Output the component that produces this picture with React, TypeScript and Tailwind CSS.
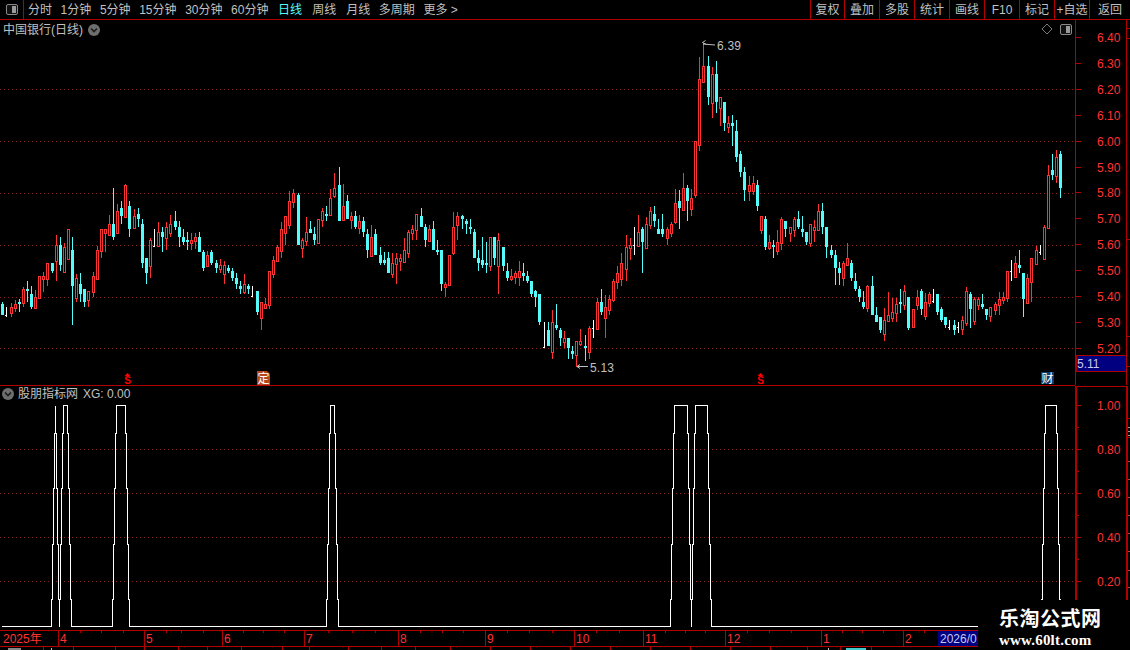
const AXIS = '#b00000';
const RED = '#ff3232';
const CYAN = '#54fcfc';
const GRID = '#8a1f1f';

// candles as type+high,top,bottom,low read off the chart, y = origin + v / 3
const SEG_A = `c427,432,465,466 w440,466,470,470 r430,442,458,470 r420,432,443,455 c418,425,431,455 r382,388,428,440 c363,387,393,425 c378,402,442,447 r390,412,443,443 r349,349,414,416
r337,349,356,395 r310,310,356,378 c309,309,333,340 r225,256,303,362 c232,255,315,333 r250,262,335,335 r208,208,296,296 c232,270,378,495 r342,355,413,425 c340,372,402,425
c388,388,427,440 r393,393,420,440 r337,348,396,410 r258,270,356,356 r208,208,272,293 r208,208,218,275 r165,193,225,225 c84,192,232,240 r132,153,219,221 c123,144,168,192
r72,75,170,172 c123,138,207,230 r148,168,204,207 c144,162,177,200 c178,192,309,325 c294,294,339,372 r234,240,318,353 w208,258,258,260 r186,217,259,262 c200,216,232,276
r186,202,234,270 r165,192,219,232 c153,183,202,210 c183,201,232,261 c207,231,246,255 c216,240,246,270 r220,240,248,270 r220,232,243,268 c216,231,276,276 c270,276,325,333
r273,285,318,318 c270,276,310,316 c300,309,324,339 r297,316,327,340 r304,316,342,372 c316,324,333,340 c324,333,354,364 c340,354,372,388 c364,378,387,402 r342,372,396,402
c372,378,387,402 w378,408,408,410 c393,393,456,464 r427,427,473,510 r414,432,443,443 r334,334,435,447 r289,301,342,354 r255,261,303,303 r186,208,272,294 r169,169,218,255
r94,124,195,207 r88,99,126,144 c99,105,255,255 r234,240,264,294 r171,217,243,258 c183,207,219,220 c201,222,240,255 r178,178,249,249 r145,154,180,200 c138,162,168,183
r87,114,164,165 r39,84,108,114 c22,75,183,183 r72,138,180,180 c105,123,177,177 r155,168,180,207 c153,168,202,207 r165,183,204,222 c171,183,216,231 c207,222,270,294
r195,231,288,288 c207,222,285,285 c261,285,309,315 c276,300,309,315 c276,294,339,339 r279,309,342,354 r279,294,312,372 r282,294,303,333 r234,270,306,309 r210,216,279,294
r195,207,219,240 r162,162,210,240 c144,168,201,201 c192,201,240,261 r195,207,243,246 c183,207,270,270 c240,270,276,285 c270,270,372,393 r366,372,381,411 r285,285,375,378
r156,201,279,285 r156,168,195,240 c165,168,177,207 c177,183,192,222 c177,201,207,222 c207,216,294,294 c270,294,309,333 c231,300,315,324 c246,309,315,339 r231,231,318,333
c231,231,294,315 r219,240,318,402 c261,261,318,333 c309,333,354,363 r327,348,357,363 r333,339,351,372 r303,333,351,378 c309,339,348,363 c333,348,363,370 c363,363,402,411
c390,393,411,441 c402,402,486,495 w486,562,562,564 c486,510,558,558 r450,486,576,597 c432,495,504,510 c504,510,534,558 r513,534,546,564 c534,534,564,597 c558,573,582,597
r543,543,585,620 r507,543,552,558 c525,558,564,603 r498,504,576,597 w480,504,504,534 r414,426,507,510 c387,426,456,465 r405,441,474,534 r405,417,450,465 r357,363,420,426
r318,339,366,387 r279,309,357,378 r225,261,327,363 r234,255,264,300 w201,255,255,285 r165,216,258,261 c201,207,246,339 r171,192,264,264 r141,153,195,207 c138,162,183,201
c177,207,222,222 c162,207,222,231 r201,207,234,255 r186,192,219,231 r87,129,186,192 c90,123,144,207 r39,84,150,153 c75,84,123,183 r87,114,147,168`;

const SEG_B = `r333,333,495,503 r82,148,345,363 r40,108,156,156 c78,108,201,225 r111,132,219,264 c93,132,216,249 r201,201,234,288 c216,216,279,303 r258,279,291,309 c255,279,288,348
c270,303,381,396 c363,372,426,441 c411,426,480,513 r438,465,483,513 r438,459,483,495 c450,465,528,543 r558,558,600,612 c558,567,651,660 r615,636,654,660 c630,645,651,684
r600,636,663,675 r561,567,639,660 c573,573,597,621 r591,591,609,636 r561,567,600,621 c543,567,591,597 c558,597,606,621 c606,606,636,645 r582,582,639,651 r570,591,600,636
r522,543,600,600 c519,543,591,612 c591,591,651,684 c645,660,675,684 c660,675,714,765`;

const SEG_C = `c396,414,428,465 r392,400,445,468 r340,385,405,405 c390,399,444,453 c429,453,477,483 c468,477,501,516 c483,516,531,537 r465,468,534,546 c438,468,555,555 c531,555,576,576
c561,561,600,609 r534,570,612,633 r486,555,573,576 r504,546,564,576 r504,522,549,576 c477,516,522,549 r465,483,525,540 c501,501,594,600 r537,537,591,594 r480,501,525,540
c477,483,537,555 r489,516,558,570 r486,492,519,531 w477,512,512,520 c492,492,546,555 c531,537,570,576 c561,561,585,594 w570,590,590,600 c570,585,600,615 w575,590,590,608
r558,570,597,615 r471,483,579,588 c486,492,537,594 r501,507,573,585 r501,507,525,540 c492,522,531,537 c537,537,555,570 r531,531,558,576 r516,522,540,555 r486,507,525,555
r486,501,510,522 r423,423,504,516 w390,423,423,453 r378,399,441,441 c360,405,414,429 c429,429,507,561 r432,444,520,522 r384,384,456,516 r348,360,402,405 w345,367,367,375
r285,291,387,387 r105,135,294,294 c72,120,135,150 r60,81,138,159 c63,72,174,204`;

type Candle = { kind: string; high: number; top: number; bottom: number; low: number };

const parseSeg = (seg: string, origin: number): Candle[] =>
  seg.trim().split(/\s+/).map((tok) => {
    const [high, top, bottom, low] = tok.slice(1).split(',').map((v) => Math.round(origin + Number(v) / 3));
    return { kind: tok[0], high, top, bottom, low };
  });

const CANDLES = [...parseSeg(SEG_A, 160), ...parseSeg(SEG_B, 30), ...parseSeg(SEG_C, 130)];

const LEFT_TABS = [
  { label: '分时', cls: '' },
  { label: '1分钟', cls: '' },
  { label: '5分钟', cls: '' },
  { label: '15分钟', cls: '' },
  { label: '30分钟', cls: '' },
  { label: '60分钟', cls: '' },
  { label: '日线', cls: 'ml-px text-[#54fcfc]' },
  { label: '周线', cls: 'ml-[1.5px]' },
  { label: '月线', cls: 'ml-[1.5px]' },
  { label: '多周期', cls: '' },
  { label: '更多 >', cls: '' },
];
const RIGHT_TABS = [
  { label: '复权', w: 'w-[34px]' },
  { label: '叠加', w: 'w-[35px]' },
  { label: '多股', w: 'w-[35px]' },
  { label: '统计', w: 'w-[35px]' },
  { label: '画线', w: 'w-[35px]' },
  { label: 'F10', w: 'w-[35px]' },
  { label: '标记', w: 'w-[35px]' },
  { label: '+自选', w: 'w-[35px]' },
  { label: '返回', w: 'w-[41px]' },
];

const MAIN_GRID = [89, 141, 193, 245, 297, 348];
const PRICE_LABELS = ['6.40', '6.30', '6.20', '6.10', '6.00', '5.90', '5.80', '5.70', '5.60', '5.50', '5.40', '5.30', '5.20'];
const SUB_LABELS = [
  { y: 405, t: '1.00' },
  { y: 449, t: '0.80' },
  { y: 493, t: '0.60' },
  { y: 537, t: '0.40' },
  { y: 581, t: '0.20' },
];
const MONTHS = [
  { x: 58, t: '4' },
  { x: 144, t: '5' },
  { x: 222, t: '6' },
  { x: 304, t: '7' },
  { x: 398, t: '8' },
  { x: 485, t: '9' },
  { x: 574, t: '10' },
  { x: 643, t: '11' },
  { x: 725, t: '12' },
  { x: 821, t: '1' },
  { x: 903, t: '2' },
];
const WEEK_TICKS = [80, 101, 123, 166, 181, 203, 243, 263, 284, 328, 352, 375, 420, 442, 463, 507, 529, 552, 596, 619, 665, 685, 705, 747, 769, 791, 842, 862, 883, 924];
const TAB_LINES = [43, 73, 115, 144, 178, 207, 241, 282, 309, 348, 381, 415, 450, 490, 530, 570, 610, 650, 690, 730, 770, 807, 840, 871];

// indicator pulses: first column of the rise, last column of the fall
const PULSES = [[51, 59], [59, 71], [112, 129], [326, 338], [670, 691], [691, 711], [1041, 1060]];
const LEVELS = [626, 599, 544, 488, 433, 405];

const indicatorPath = () => {
  let d = 'M2 626.5';
  PULSES.forEach(([a, b]) => {
    for (let i = 0; i < 5; i++) {
      d += ` L${a + i + 0.5} ${LEVELS[i] + 0.5} L${a + i + 0.5} ${LEVELS[i + 1] + 0.5}`;
    }
    for (let i = 0; i < 5; i++) {
      d += ` L${b - 4 + i + 0.5} ${LEVELS[5 - i] + 0.5} L${b - 4 + i + 0.5} ${LEVELS[4 - i] + 0.5}`;
    }
  });
  return d + ' L978 626.5';
};

const ChevronDot = () => (
  <svg width="12" height="12" viewBox="0 0 12 12" className="shrink-0">
    <circle cx="6" cy="6" r="6" fill="#6e6e6e" />
    <path d="M3 4.5 L6 7.5 L9 4.5" fill="none" stroke="#1c1c1c" strokeWidth="1.6" />
  </svg>
);

const PanelIcon = () => (
  <svg width="12" height="11" viewBox="0 0 12 11">
    <rect x="0.5" y="0.5" width="11" height="10" rx="1.5" fill="#111" stroke="#8a8a8a" />
    <rect x="6" y="2" width="4" height="7" fill="#9a9a9a" />
  </svg>
);

const Candles = () => (
  <g shapeRendering="crispEdges">
    {CANDLES.map((c, i) => {
      const x = Math.round(2.33 + 4.1 * i);
      if (c.kind === 'w') {
        return (
          <g key={i}>
            <rect x={x} y={c.high} width="1" height={c.low - c.high} fill="#fff" />
            <rect x={x - 1} y={c.top} width="1" height="1" fill="#fff" />
          </g>
        );
      }
      const color = c.kind === 'r' ? RED : CYAN;
      return (
        <g key={i}>
          <rect x={x} y={c.high} width="1" height={Math.max(c.low - c.high, 1)} fill={color} />
          {c.kind === 'r' ? (
            <rect x={x - 0.5} y={c.top + 0.5} width="2" height={Math.max(c.bottom - c.top, 1)} fill="#000" stroke={color} />
          ) : (
            <rect x={x - 1} y={c.top} width="3" height={Math.max(c.bottom - c.top, 1)} fill={color} />
          )}
        </g>
      );
    })}
  </g>
);

const Dollar = ({ x }: { x: number }) => (
  <g>
    <polygon points={`${x - 3},376 ${x},373 ${x + 3},376`} fill="#ff0000" />
    <text x={x} y={384} textAnchor="middle" fontSize="10" fontWeight="700" fill="#ff0000">S</text>
  </g>
);

const MainChart = () => (
  <svg width="1075" height="365" viewBox="0 20 1075 365" className="shrink-0">
    {MAIN_GRID.map((y) => (
      <line key={y} x1="0" x2="1075" y1={y + 0.5} y2={y + 0.5} stroke={GRID} strokeDasharray="1 3" />
    ))}
    <Candles />
    {/* high / low flags */}
    <path d="M706.5 44.5 L702.5 42.5 L705.5 40.5 M703 44 L715 45" fill="none" stroke="#c0c0c0" />
    <text x="717" y="50" fontSize="12" letterSpacing="0.2" fill="#c0c0c0">6.39</text>
    <path d="M577 366.5 L588 366.5 M577 366.5 L580 364.5 M577 366.5 L580 368.5" fill="none" stroke="#c0c0c0" />
    <text x="590" y="372" fontSize="12" letterSpacing="0.2" fill="#c0c0c0">5.13</text>
    {/* event markers */}
    <Dollar x={127.5} />
    <Dollar x={760.5} />
    <path d="M257 371 H267 L270 374 V385 H257 Z" fill="#b5471b" />
    <text x="263.5" y="383" textAnchor="middle" fontSize="12" fill="#fff">定</text>
    <rect x="1041" y="372" width="13" height="12" fill="#0f3c6e" />
    <text x="1047.5" y="383" textAnchor="middle" fontSize="12" fill="#fff">财</text>
    <path d="M1047 24 L1052 29 L1047 34 L1042 29 Z" fill="none" stroke="#7a7a7a" />
  </svg>
);

const MainAxis = () => (
  <svg width="55" height="365" viewBox="1075 20 55 365" className="shrink-0">
    <g shapeRendering="crispEdges">
      <rect x="1075" y="20" width="1" height="365" fill={AXIS} />
      <rect x="1126" y="20" width="1" height="365" fill={AXIS} />
      {PRICE_LABELS.map((_, i) => (
        <rect key={i} x="1076" y={Math.round(37 + i * 25.9)} width="5" height="1" fill={AXIS} />
      ))}
      {[28, 38, 239, 336, 366].map((y) => (
        <rect key={y} x="1127" y={y} width="3" height="1" fill={AXIS} />
      ))}
      <rect x="1076" y="355" width="50" height="16" fill="#000080" stroke={AXIS} />
    </g>
    {PRICE_LABELS.map((t, i) => (
      <text key={t} x="1097" y={37 + i * 25.9 + 5} fontSize="12" fill={RED}>{t}</text>
    ))}
    <text x="1077" y="368" fontSize="12" fill="#c8c8f0">5.11</text>
  </svg>
);

const SubChart = () => (
  <svg width="1075" height="244" viewBox="0 386 1075 244" className="shrink-0">
    {SUB_LABELS.slice(1).map(({ y }) => (
      <line key={y} x1="0" x2="1075" y1={y + 0.5} y2={y + 0.5} stroke={GRID} strokeDasharray="1 3" />
    ))}
    <path d={indicatorPath()} fill="none" stroke="#fff" shapeRendering="crispEdges" />
  </svg>
);

const SubAxis = () => (
  <svg width="55" height="244" viewBox="1075 386 55 244" className="shrink-0">
    <g shapeRendering="crispEdges">
      <rect x="1075" y="386" width="2" height="244" fill={AXIS} />
      <rect x="1126" y="386" width="2" height="244" fill={AXIS} />
      <rect x="1075" y="385" width="52" height="2" fill={AXIS} />
      {SUB_LABELS.map(({ y }) => (
        <rect key={y} x="1077" y={y} width="4" height="1" fill={AXIS} />
      ))}
      {[427, 471, 515, 559].map((y) => (
        <rect key={y} x="1077" y={y} width="2" height="1" fill={AXIS} />
      ))}
      {[461, 479, 497, 515, 533, 551, 570, 587].map((y) => (
        <rect key={y} x="1128" y={y} width="2" height="1" fill="#c04040" />
      ))}
      <rect x="1128" y="418" width="2" height="1" fill={AXIS} />
      <rect x="1128" y="427" width="2" height="1" fill="#a0a0a0" />
      <rect x="1128" y="431" width="2" height="1" fill="#a0a0a0" />
      <rect x="1128" y="435" width="2" height="1" fill="#a0a0a0" />
      <rect x="1128" y="437" width="2" height="1" fill={AXIS} />
    </g>
    {SUB_LABELS.map(({ y, t }) => (
      <text key={t} x="1097" y={y + 5} fontSize="12" fill={RED}>{t}</text>
    ))}
  </svg>
);

const TimeAxis = () => (
  <svg width="1130" height="20" viewBox="0 630 1130 20" className="shrink-0">
    <g shapeRendering="crispEdges">
      <rect x="0" y="630" width="978" height="1" fill={AXIS} />
      <rect x="0" y="646" width="978" height="1" fill={AXIS} />
      {MONTHS.map(({ x }) => (
        <rect key={x} x={x} y="630" width="1" height="16" fill={AXIS} />
      ))}
      {WEEK_TICKS.map((x) => (
        <rect key={x} x={x} y="631" width="1" height="2" fill={AXIS} />
      ))}
      {TAB_LINES.map((x) => (
        <rect key={x} x={x} y="647" width="1" height="3" fill={AXIS} />
      ))}
      <rect x="938" y="631" width="40" height="15" fill="#000080" />
      <rect x="8" y="648" width="13" height="2" fill="#c0c0c0" opacity="0.7" />
      <rect x="51" y="648" width="1" height="2" fill="#c0c0c0" />
      <rect x="828" y="648" width="1" height="2" fill="#c0c0c0" />
      <rect x="846" y="648" width="20" height="2" fill={CYAN} opacity="0.8" />
    </g>
    <text x="3" y="643" fontSize="12" fill={RED}>2025年</text>
    {MONTHS.map(({ x, t }) => (
      <text key={x} x={x + 2} y="643" fontSize="12" fill={RED}>{t}</text>
    ))}
    <text x="940" y="643" fontSize="12" fill="#c8c8f0">2026/0</text>
  </svg>
);

export default function App() {
  return (
    <div className="relative flex h-[650px] w-[1130px] flex-col overflow-hidden bg-black font-['Liberation_Sans','Noto_Sans_CJK_SC',sans-serif] text-xs text-[#c0c0c0]">
      {/* toolbar */}
      <div className="flex h-5 shrink-0 items-stretch border-b border-[#b00000]">
        <div className="flex w-6 items-center justify-center border-r border-[#b00000]">
          <PanelIcon />
        </div>
        <div className="flex items-center gap-[8.6px] pl-1">
          {LEFT_TABS.map((tab) => (
            <span key={tab.label} className={tab.cls}>{tab.label}</span>
          ))}
        </div>
        <div className="ml-auto flex">
          {RIGHT_TABS.map((tab) => (
            <div key={tab.label} className={`${tab.w} flex items-center justify-center whitespace-nowrap border-l border-[#b00000]`}>
              {tab.label}
            </div>
          ))}
        </div>
      </div>

      {/* price panel */}
      <div className="relative flex h-[365px] shrink-0">
        <MainChart />
        <MainAxis />
        <div className="absolute left-[3px] top-[3px] flex items-center gap-[5px] leading-[14px]">
          <span>中国银行(日线)</span>
          <ChevronDot />
        </div>
        <div className="absolute left-[1060px] top-1 flex">
          <PanelIcon />
        </div>
      </div>
      <div className="h-px w-[1075px] shrink-0 bg-[#b00000]" />

      {/* indicator panel */}
      <div className="relative flex h-[244px] shrink-0">
        <SubChart />
        <SubAxis />
        <div className="absolute left-[2px] top-[1px] flex items-center gap-1 leading-[14px]">
          <ChevronDot />
          <span>股朋指标网</span>
          <span className="ml-px">XG: 0.00</span>
        </div>
      </div>

      <TimeAxis />

      {/* watermark */}
      <div className="absolute bottom-0 right-0 flex h-[50px] w-[152px] flex-col bg-black pl-[21px] pt-[8px]">
        <span className="text-[20px] font-bold leading-[22px] tracking-[0.5px] text-white">乐淘公式网</span>
        <span className="mt-[3px] font-['Liberation_Serif',serif] text-[15px] font-bold leading-[14px] tracking-[0.2px] text-white">www.60lt.com</span>
      </div>
    </div>
  );
}
